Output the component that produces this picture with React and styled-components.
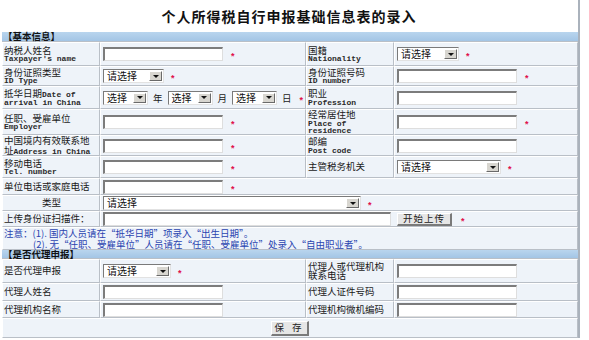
import styled, { createGlobalStyle } from "styled-components";

const GlobalStyle = createGlobalStyle`
  html, body {
    margin: 0;
    padding: 0;
    background: #fff;
  }
  body {
    font-family: "Noto Sans CJK SC", "Liberation Sans", sans-serif;
    color: #1a1a1a;
  }
`;

const Frame = styled.div`
  width: 580px;
  height: 338px;
  box-sizing: border-box;
  border-right: 2px solid #aab2bc;
`;

const Title = styled.h1`
  margin: 0;
  height: 32px;
  display: flex;
  align-items: center;
  justify-content: center;
  font-size: 14px;
  font-weight: bold;
  letter-spacing: 1px;
  color: #111;
`;

const Table = styled.table`
  width: 576px;
  margin-left: 2px;
  border-collapse: separate;
  border-spacing: 0;
  table-layout: fixed;
  background: #eef3f9;
`;

const Row = styled.tr`
  height: ${(p) => p.$h}px;
`;

const Cell = styled.td`
  box-sizing: border-box;
  padding: 0 0 0 ${(p) => (p.$pad ?? 2)}px;
  border-top: 1px solid #fff;
  border-left: 1px solid #fff;
  border-right: 1px solid #b9bfc7;
  border-bottom: 1px solid #b9bfc7;
  vertical-align: middle;
  text-align: ${(p) => (p.$center ? "center" : "left")};
  line-height: 0;
`;

const SectionCell = styled.td`
  box-sizing: border-box;
  padding: 0 0 0 1px;
  background: linear-gradient(#b9d5ee, #a3c5e5);
  border-bottom: 1px solid #b9bfc7;
  font-size: 9.5px;
  line-height: 7px;
  font-weight: bold;
  color: #111;
`;

const Zh = styled.div`
  font-size: 9.5px;
  line-height: 9.5px;
  white-space: nowrap;
  color: #1a1a1a;
`;

const En = styled.div`
  font-family: "Liberation Mono", "DejaVu Sans Mono", monospace;
  font-size: 8px;
  font-weight: bold;
  line-height: 7px;
  white-space: nowrap;
  color: #2a2a2a;
`;

const EnInline = styled.span`
  font-family: "Liberation Mono", "DejaVu Sans Mono", monospace;
  font-size: 8px;
  font-weight: bold;
  line-height: 0;
  color: #2a2a2a;
`;

const Field = styled.div`
  display: flex;
  align-items: center;
  gap: ${(p) => p.$gap ?? 5}px;
  height: 14px;
`;

const TextInput = styled.input`
  box-sizing: border-box;
  width: ${(p) => p.$w ?? 120}px;
  height: 14px;
  margin: 0;
  padding: 0 2px;
  border-top: 2px solid #7c7c7c;
  border-left: 2px solid #7c7c7c;
  border-right: 1px solid #dedede;
  border-bottom: 1px solid #dedede;
  background: #fff;
  outline: none;
`;

const SelectBox = styled.span`
  display: inline-flex;
  box-sizing: border-box;
  width: ${(p) => p.$w}px;
  height: 14px;
  border-top: 1px solid #7a7a7a;
  border-left: 1px solid #7a7a7a;
  border-right: 1px solid #e2e2e2;
  border-bottom: 1px solid #e2e2e2;
  background: #fff;
`;

const SelectText = styled.span`
  flex: 1;
  padding-left: 3px;
  font-size: 10px;
  line-height: 12px;
  color: #111;
  white-space: nowrap;
`;

const SelectArrow = styled.span`
  box-sizing: border-box;
  width: 13px;
  margin: 1px;
  display: flex;
  align-items: center;
  justify-content: center;
  background: #d8d6d0;
  border-top: 1px solid #fff;
  border-left: 1px solid #fff;
  border-right: 1px solid #6a6a6a;
  border-bottom: 1px solid #6a6a6a;
  &::after {
    content: "";
    border-left: 3px solid transparent;
    border-right: 3px solid transparent;
    border-top: 3px solid #111;
  }
`;

const Unit = styled.span`
  font-size: 9.5px;
  line-height: 10px;
  color: #1a1a1a;
`;

const Star = styled.span`
  margin-left: ${(p) => p.$ml ?? 3}px;
  padding-top: 4px;
  font-family: "Liberation Sans", sans-serif;
  font-size: 9px;
  font-weight: bold;
  line-height: 8px;
  color: #e0104a;
`;

const Button = styled.button`
  box-sizing: border-box;
  width: ${(p) => p.$w}px;
  height: ${(p) => p.$h}px;
  margin: 0;
  padding: 0;
  font-family: "Noto Sans CJK SC", sans-serif;
  font-size: 9.5px;
  line-height: 1;
  letter-spacing: ${(p) => p.$ls ?? 1}px;
  color: #222;
  background: #e6e6e6;
  border-top: 1px solid #fff;
  border-left: 1px solid #fff;
  border-right: 2px solid #7a7a7a;
  border-bottom: 2px solid #7a7a7a;
`;

const Notice = styled.div`
  font-size: 9.5px;
  line-height: 10.5px;
  color: #2a44b0;
  white-space: nowrap;
`;

const NoticeLine = styled.div`
  padding-left: ${(p) => p.$indent ?? 0}px;
`;

const Center = styled.div`
  display: flex;
  justify-content: center;
`;

function Select({ w, text = "请选择" }) {
  return (
    <SelectBox $w={w}>
      <SelectText>{text}</SelectText>
      <SelectArrow />
    </SelectBox>
  );
}

function Label({ zh, en, center }) {
  return (
    <Cell $pad={1} $center={center}>
      {zh.map((z) => (
        <Zh key={z}>{z}</Zh>
      ))}
      {en && en.map((e) => <En key={e}>{e}</En>)}
    </Cell>
  );
}

function InputField({ w, star = true }) {
  return (
    <Cell $pad={2}>
      <Field>
        <TextInput $w={w} />
        {star && <Star $ml={3}>*</Star>}
      </Field>
    </Cell>
  );
}

function SelectField({ w, star = true }) {
  return (
    <Cell $pad={2}>
      <Field>
        <Select w={w} />
        {star && <Star $ml={2}>*</Star>}
      </Field>
    </Cell>
  );
}

export default function App() {
  return (
    <Frame>
      <GlobalStyle />
      <Title>个人所得税自行申报基础信息表的录入</Title>
      <Table>
        <colgroup>
          <col style={{ width: 98 }} />
          <col style={{ width: 206 }} />
          <col style={{ width: 88 }} />
          <col style={{ width: 184 }} />
        </colgroup>
        <tbody>
          <Row $h={10}>
            <SectionCell colSpan={4}>【基本信息】</SectionCell>
          </Row>
          <Row $h={24}>
            <Label zh={["纳税人姓名"]} en={["Taxpayer's name"]} />
            <InputField />
            <Label zh={["国籍"]} en={["Nationality"]} />
            <SelectField w={62} />
          </Row>
          <Row $h={20}>
            <Label zh={["身份证照类型"]} en={["ID Type"]} />
            <SelectField w={61} />
            <Label zh={["身份证照号码"]} en={["ID number"]} />
            <InputField />
          </Row>
          <Row $h={23}>
            <Cell $pad={1}>
              <Zh>
                抵华日期<EnInline>Date of</EnInline>
              </Zh>
              <En>arrival in China</En>
            </Cell>
            <Cell $pad={2}>
              <Field>
                <Select w={45} text="选择" />
                <Unit>年</Unit>
                <Select w={45} text="选择" />
                <Unit>月</Unit>
                <Select w={45} text="选择" />
                <Unit>日</Unit>
                <Star>*</Star>
              </Field>
            </Cell>
            <Label zh={["职业"]} en={["Profession"]} />
            <InputField star={false} />
          </Row>
          <Row $h={26}>
            <Label zh={["任职、受雇单位"]} en={["Employer"]} />
            <InputField />
            <Label zh={["经常居住地"]} en={["Place of", "residence"]} />
            <InputField />
          </Row>
          <Row $h={21}>
            <Cell $pad={1}>
              <Zh>中国境内有效联系地</Zh>
              <Zh>
                址<EnInline>Address in China</EnInline>
              </Zh>
            </Cell>
            <InputField />
            <Label zh={["邮编"]} en={["Post code"]} />
            <InputField star={false} />
          </Row>
          <Row $h={22}>
            <Label zh={["移动电话"]} en={["Tel. number"]} />
            <InputField />
            <Label zh={["主管税务机关"]} />
            <SelectField w={104} />
          </Row>
          <Row $h={17}>
            <Label zh={["单位电话或家庭电话"]} />
            <Cell $pad={2} colSpan={3}>
              <Field>
                <TextInput $w={120} />
                <Star $ml={3}>*</Star>
              </Field>
            </Cell>
          </Row>
          <Row $h={16}>
            <Label zh={["类型"]} center />
            <Cell $pad={2} colSpan={3}>
              <Field>
                <Select w={258} />
                <Star $ml={2}>*</Star>
              </Field>
            </Cell>
          </Row>
          <Row $h={16}>
            <Label zh={["上传身份证扫描件："]} />
            <Cell $pad={2} colSpan={3}>
              <Field $gap={6}>
                <TextInput $w={288} />
                <Button $w={55} $h={13}>
                  开始上传
                </Button>
                <Star $ml={3}>*</Star>
              </Field>
            </Cell>
          </Row>
          <Row $h={23}>
            <Cell $pad={1} colSpan={4}>
              <Notice>
                <NoticeLine>注意：(1). 国内人员请在“抵华日期”项录入“出生日期”。</NoticeLine>
                <NoticeLine $indent={29}>
                  (2). 无“任职、受雇单位”人员请在“任职、受雇单位”处录入“自由职业者”。
                </NoticeLine>
              </Notice>
            </Cell>
          </Row>
          <Row $h={9}>
            <SectionCell colSpan={4}>【是否代理申报】</SectionCell>
          </Row>
          <Row $h={24}>
            <Label zh={["是否代理申报"]} />
            <SelectField w={68} />
            <Label zh={["代理人或代理机构", "联系电话"]} />
            <InputField star={false} />
          </Row>
          <Row $h={18}>
            <Label zh={["代理人姓名"]} />
            <InputField star={false} />
            <Label zh={["代理人证件号码"]} />
            <InputField star={false} />
          </Row>
          <Row $h={17}>
            <Label zh={["代理机构名称"]} />
            <InputField star={false} />
            <Label zh={["代理机构微机编码"]} />
            <InputField star={false} />
          </Row>
          <Row $h={20}>
            <Cell $pad={0} colSpan={4}>
              <Center>
                <Button $w={38} $h={15} $ls={3}>
                  保 存
                </Button>
              </Center>
            </Cell>
          </Row>
        </tbody>
      </Table>
    </Frame>
  );
}
